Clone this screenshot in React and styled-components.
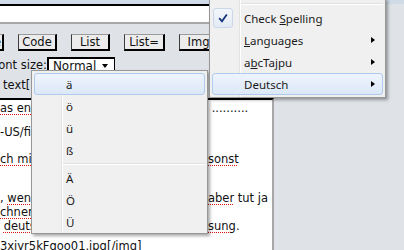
import React from 'react';
import styled, { createGlobalStyle } from 'styled-components';

const GlobalStyle = createGlobalStyle`
	html,
	body {
		margin: 0;
		padding: 0;
		background: #dfe3e8;
		overflow: hidden;
	}
`;

const Screen = styled.div`
	position: relative;
	width: 404px;
	height: 250px;
	overflow: hidden;
	display: flex;
	flex-direction: column;
	background: #dfe3e8;
	font-family: 'DejaVu Sans', Verdana, sans-serif;
	font-size: 11.5px;
	color: #111;
`;

const TopBand = styled.div`
	height: 4px;
	flex: none;
	background: #cfdbe7;
`;

const Form = styled.div`
	width: 274px;
	flex: 1;
	display: flex;
	flex-direction: column;
	min-height: 0;
`;

const TitleInput = styled.div`
	height: 16px;
	flex: none;
	background: #fff;
	border-top: 2px solid #000;
	border-bottom: 2px solid #a8a8a8;
	border-right: 2px solid #a8a8a8;
`;

const ButtonBar = styled.div`
	display: flex;
	gap: 14px;
	margin-top: 10px;
	height: 17px;
	flex: none;
`;

const TagButton = styled.div`
	flex: none;
	box-sizing: border-box;
	width: ${(props) => props.$width}px;
	height: 17px;
	margin-left: ${(props) => props.$shift || 0}px;
	border-top: 1px solid #9a9a9a;
	border-left: 1px solid #3c3c3c;
	border-right: 2px solid #000;
	border-bottom: 2px solid #000;
	background: #ececec;
	text-align: center;
	line-height: 14px;
	white-space: nowrap;
	overflow: hidden;
`;

const FontRow = styled.div`
	display: flex;
	align-items: center;
	margin-top: 6px;
	height: 16px;
	flex: none;
`;

const Label = styled.span`
	margin-left: -8px;
	white-space: nowrap;
`;

const Select = styled.div`
	box-sizing: border-box;
	width: 68px;
	height: 16px;
	display: flex;
	align-items: center;
	padding-left: 4px;
	background: #fff;
	border-top: 2px solid #000;
	border-left: 2px solid #000;
	border-right: 1px solid #000;
	font-size: 12px;

	&::after {
		content: '';
		margin-left: auto;
		margin-right: 6px;
		border-top: 4px solid #000;
		border-left: 3.5px solid transparent;
		border-right: 3.5px solid transparent;
	}
`;

const HintRow = styled.div`
	margin-top: 5px;
	height: 14px;
	line-height: 14px;
	padding-left: 3px;
	white-space: nowrap;
	flex: none;
`;

const TextBox = styled.div`
	margin-top: 6px;
	padding-top: 1px;
	flex: 1;
	background: #fff;
	border-top: 2px solid #000;
	border-right: 2px solid #a8a8a8;
	overflow: hidden;
`;

const Line = styled.div`
	display: grid;
	grid-template-columns: 208px 1fr;
	height: 14px;
	line-height: 14px;
	margin-top: ${(props) => props.$gap || 0}px;
	white-space: pre;

	span {
		overflow: hidden;
	}
`;

const Miss = styled.em`
	font-style: normal;
	text-decoration: underline dotted #e01010;
	text-decoration-thickness: 1px;
	text-underline-offset: 2px;
`;

const Menu = styled.div`
	position: absolute;
	left: ${(props) => props.$left}px;
	top: ${(props) => props.$top}px;
	width: 177px;
	box-sizing: border-box;
	padding: 2px 2px ${(props) => props.$bottom}px;
	border: 1px solid #979797;
	background: linear-gradient(
			to right,
			transparent 29px,
			#e2e3e3 29px,
			#e2e3e3 30px,
			#ffffff 30px,
			#ffffff 31px,
			transparent 31px
		),
		#f0f0f0;
	box-shadow: 2px 2px 3px rgba(0, 0, 0, 0.35);
	font-family: 'Noto Sans', 'Open Sans', sans-serif;
	font-size: 11.5px;
	color: #1a1a1a;
`;

const Item = styled.div`
	display: flex;
	align-items: center;
	height: 22px;
	box-sizing: border-box;
	border: 1px solid ${(props) => (props.$active ? '#aecbee' : 'transparent')};
	border-radius: 3px;
	background: ${(props) =>
		props.$active ? 'linear-gradient(#eef4fc, #dce8f7)' : 'transparent'};
	white-space: nowrap;
`;

const ItemText = styled.span`
	white-space: pre;
`;

const IconSlot = styled.div`
	width: 31px;
	height: 20px;
	flex: none;
	display: flex;
`;

const CheckBox = styled.div`
	width: 20px;
	height: 20px;
	box-sizing: border-box;
	display: flex;
	align-items: center;
	justify-content: center;
	border: 1px solid #c9d7e8;
	border-radius: 3px;
	background: linear-gradient(#f3f7fc, #e2eaf4);
`;

const Arrow = styled.i`
	margin-left: auto;
	margin-right: 7px;
	border-left: 4px solid #000;
	border-top: 3.5px solid transparent;
	border-bottom: 3.5px solid transparent;
`;

const Separator = styled.div`
	margin: 2px 0 2px 29px;
	border-top: 1px solid #e0e0e0;
	border-bottom: 1px solid #ffffff;
`;

const chars = ['ä', 'ö', 'ü', 'ß'];
const capitals = ['Ä', 'Ö', 'Ü'];

const App = () => {
	return (
		<>
			<GlobalStyle />
			<Screen>
				<TopBand />
				<Form>
					<TitleInput />
					<ButtonBar>
						<TagButton $width={40} $shift={-36}>
							Quote
						</TagButton>
						<TagButton $width={39}>Code</TagButton>
						<TagButton $width={39}>List</TagButton>
						<TagButton $width={41}>List=</TagButton>
						<TagButton $width={40}>Img</TagButton>
					</ButtonBar>
					<FontRow>
						<Label>Font size:</Label>
						<Select>Normal</Select>
					</FontRow>
					<HintRow>text[.</HintRow>
					<TextBox>
						<Line>
							<span>
								<Miss>as ent</Miss>
							</span>
							<span> ..........</span>
						</Line>
						<Line $gap={10}>
							<span>-US/fi</span>
							<span />
						</Line>
						<Line $gap={13}>
							<span>
								<Miss>ch mi</Miss>
							</span>
							<span>
								<Miss>sonst</Miss>
							</span>
						</Line>
						<Line $gap={25}>
							<span>
								, <Miss>wen</Miss>
							</span>
							<span>
								<Miss>aber</Miss> tut ja
							</span>
						</Line>
						<Line>
							<span>
								<Miss>chner</Miss>
							</span>
							<span />
						</Line>
						<Line>
							<span>
								{' '}
								<Miss>deuts</Miss>
							</span>
							<span>
								<Miss>sung</Miss>.
							</span>
						</Line>
						<Line $gap={6}>
							<span>3xiyr5kFqoo01.jpg[/img]</span>
							<span />
						</Line>
					</TextBox>
				</Form>

				<Menu $left={31} $top={70} $bottom={0}>
					{chars.map((c, i) => (
						<Item key={c} $active={i === 0}>
							<IconSlot />
							<ItemText>{c}</ItemText>
						</Item>
					))}
					<Separator />
					{capitals.map((c) => (
						<Item key={c}>
							<IconSlot />
							<ItemText>{c}</ItemText>
						</Item>
					))}
				</Menu>

				<Menu $left={209} $top={-2} $bottom={2}>
					<Separator />
					<Item>
						<IconSlot>
							<CheckBox>
								<svg width="10" height="10" viewBox="0 0 10 10">
									<path
										d="M1.2 5.2 L4 8.3 L8.8 1.4"
										fill="none"
										stroke="#17357a"
										strokeWidth="1.8"
									/>
								</svg>
							</CheckBox>
						</IconSlot>
						<ItemText>
							Check <u>S</u>pelling
						</ItemText>
					</Item>
					<Item>
						<IconSlot />
						<ItemText>
							<u>L</u>anguages
						</ItemText>
						<Arrow />
					</Item>
					<Item>
						<IconSlot />
						<ItemText>
							a<u>b</u>cTajpu
						</ItemText>
						<Arrow />
					</Item>
					<Item $active>
						<IconSlot />
						<ItemText>Deutsch</ItemText>
						<Arrow />
					</Item>
				</Menu>
			</Screen>
		</>
	);
};

export default App;
